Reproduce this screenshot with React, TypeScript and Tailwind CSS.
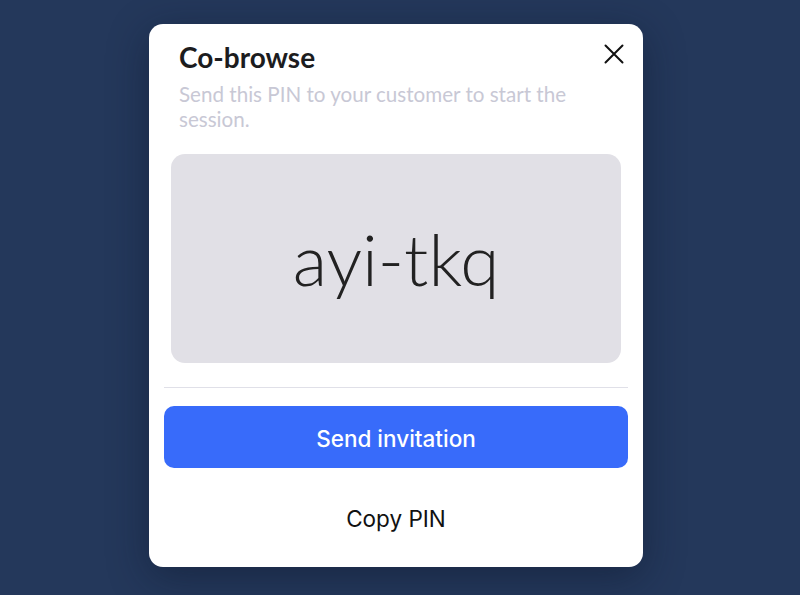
const lato = { fontFamily: 'Lato, "Noto Sans", sans-serif' }

const CloseIcon = () => (
  <svg width="20" height="20" viewBox="0 0 20 20" fill="none">
    <path
      d="M1.5 1.5L18.5 18.5M18.5 1.5L1.5 18.5"
      stroke="#111111"
      strokeWidth="2"
      strokeLinecap="round"
    />
  </svg>
)

export default function App() {
  return (
    <div className="flex h-[595px] w-[800px] justify-center bg-[#24385b] pt-[24px] pr-[8px]">
      <div className="flex h-[543px] w-[494px] flex-col rounded-[14px] bg-white px-[15px] pt-[16px] pb-[17px] shadow-[0_10px_40px_rgba(10,20,40,0.45)]">
        <div className="relative px-[15px]">
          <h2
            className="text-[28px] leading-[34px] font-bold text-[#1c1c1e]"
            style={lato}
          >
            Co-browse
          </h2>
          <p
            className="mt-[8px] pr-[30px] text-[20.6px] leading-[25px] text-[#c8c8d5]"
            style={lato}
          >
            Send this PIN to your customer to start the session.
          </p>
          <button className="absolute top-[4px] right-[4px] p-0">
            <CloseIcon />
          </button>
        </div>

        <div className="mx-[7px] mt-[22px] flex h-[209px] items-center justify-center rounded-[14px] bg-[#e1e0e6]">
          <span
            className="text-[71px] leading-none font-light text-[#222222]"
            style={lato}
          >
            ayi-tkq
          </span>
        </div>

        <div className="mt-[24px] h-px bg-[#e0e0e8]" />

        <button className="mt-[18px] flex h-[62px] items-center justify-center rounded-[10px] bg-[#386bfa] pt-[3px] font-['Inter'] text-[22.5px] font-medium text-white">
          Send invitation
        </button>

        <button className="mt-[18px] flex h-[62px] items-center justify-center pt-[3px] font-['Inter'] text-[22.5px] text-[#111111]">
          Copy PIN
        </button>
      </div>
    </div>
  )
}
